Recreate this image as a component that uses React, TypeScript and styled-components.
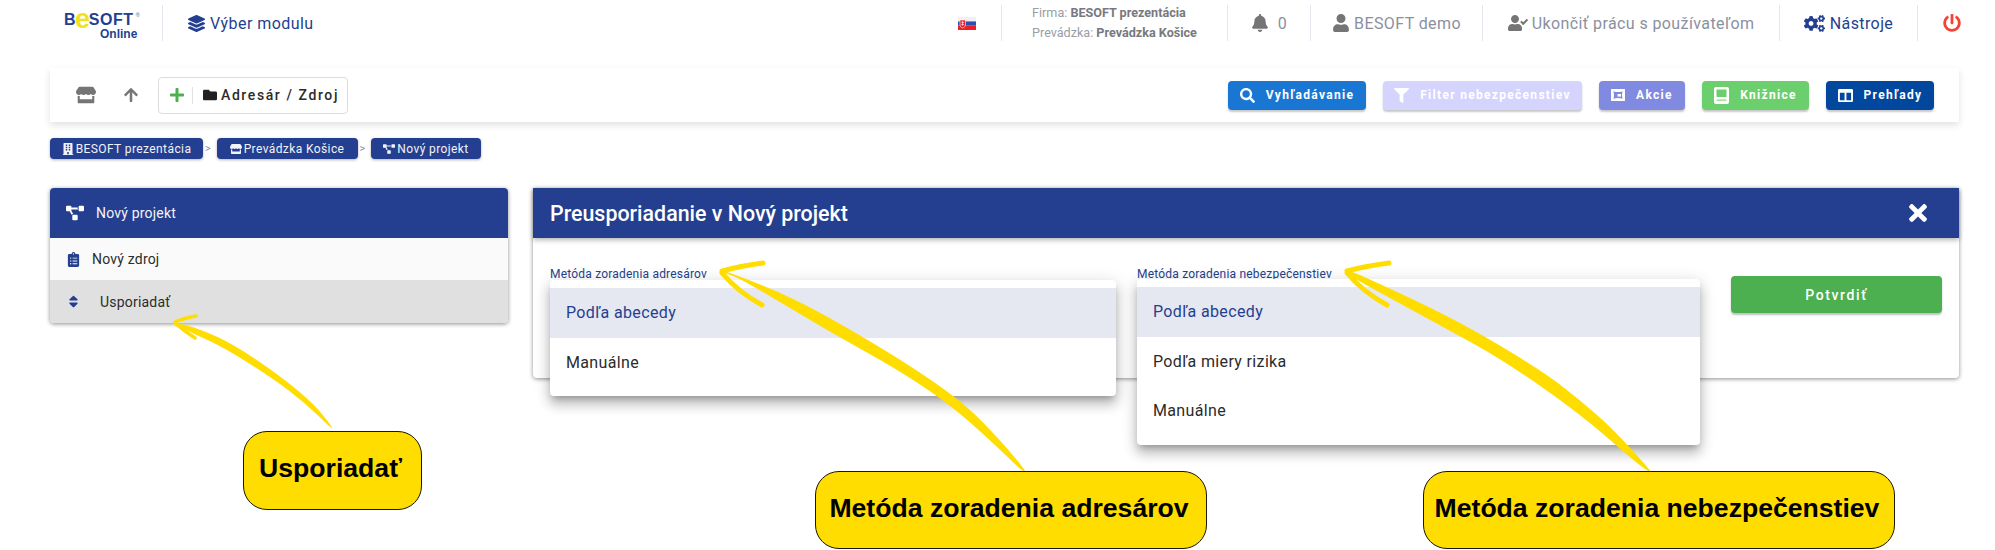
import React from "react";
import styled, { createGlobalStyle } from "styled-components";
import {
  FaArrowUp,
  FaBell,
  FaBuilding,
  FaClipboardList,
  FaCogs,
  FaColumns,
  FaFilter,
  FaFolder,
  FaLayerGroup,
  FaPlus,
  FaPowerOff,
  FaProjectDiagram,
  FaSearch,
  FaSort,
  FaStore,
  FaTimes,
  FaUser,
  FaUserCheck,
} from "react-icons/fa";

const NAVY = "#243f8f";

const GlobalStyle = createGlobalStyle`
  html, body {
    margin: 0;
    background: #fff;
    font-family: Roboto, "Noto Sans", sans-serif;
  }
`;

const Page = styled.div`
  position: relative;
  width: 1995px;
  height: 550px;
  overflow: hidden;
  background: #fff;
`;

const TopBar = styled.header`
  display: flex;
  height: 36px;
  padding: 5px 0 9px;
`;

const LogoCell = styled.div`
  width: 98px;
  margin-left: 64px;
  border-right: 1px solid #e4e7f0;
  display: flex;
  flex-direction: column;
`;

const LogoTop = styled.div`
  font-family: "Liberation Sans", Arial, sans-serif;
  font-size: 16px;
  line-height: 16px;
  letter-spacing: 0.55px;
  font-weight: 700;
  color: ${NAVY};
  margin-top: 7px;
  display: flex;
  align-items: center;
  sup {
    font-size: 6px;
    line-height: 6px;
    align-self: flex-start;
    color: #8a8fa5;
    margin-left: 2px;
  }
`;

const LogoE = styled.span`
  color: #f2e21a;
  font-size: 27px;
  line-height: 16px;
  margin: -3px -2px 0 -1px;
`;

const LogoBottom = styled.div`
  font-family: "Liberation Sans", Arial, sans-serif;
  font-size: 12px;
  line-height: 12px;
  font-weight: 700;
  color: ${NAVY};
  margin: 0 0 0 36px;
`;

const ModuleLink = styled.div`
  display: flex;
  align-items: center;
  gap: 5px;
  margin-left: 25px;
  font-size: 16px;
  letter-spacing: 0.45px;
  color: ${NAVY};
  svg {
    font-size: 17px;
  }
`;

const Spacer = styled.div`
  flex: 1;
`;

const NavCell = styled.div<{ $w: number; $color?: string; $gap?: number; $plain?: boolean; $size?: number; $pr?: number }>`
  width: ${(p) => p.$w}px;
  box-sizing: border-box;
  display: flex;
  align-items: center;
  justify-content: center;
  gap: ${(p) => p.$gap ?? 5}px;
  padding-right: ${(p) => p.$pr ?? 0}px;
  border-left: ${(p) => (p.$plain ? "none" : "1px solid #e4e7f0")};
  font-size: 16px;
  letter-spacing: 0.4px;
  color: ${(p) => p.$color ?? "#8b909e"};
  svg {
    color: ${(p) => p.$color ?? "#757575"};
    font-size: ${(p) => p.$size ?? 18}px;
  }
`;

const Flag = styled.svg`
  display: block;
  width: 18px;
  height: 13px;
`;

const CompanyInfo = styled.div`
  font-size: 12.6px;
  line-height: 20px;
  letter-spacing: 0;
  color: #9a9da6;
  b {
    font-weight: 700;
    color: #77797f;
  }
`;

const Toolbar = styled.div`
  display: flex;
  align-items: center;
  height: 54px;
  margin: 18px 36px 0 50px;
  background: #fff;
  box-shadow: 0 3px 7px rgba(0, 0, 0, 0.12);
`;

const ToolIcon = styled.span<{ $w: number; $size: number }>`
  display: flex;
  justify-content: flex-end;
  width: ${(p) => p.$w}px;
  color: #757575;
  font-size: ${(p) => p.$size}px;
`;

const DirectoryBox = styled.div`
  display: flex;
  align-items: center;
  box-sizing: border-box;
  width: 190px;
  height: 37px;
  margin-left: 19px;
  border: 1px solid #dcdcdc;
  border-radius: 4px;
  font-size: 14px;
  font-weight: 500;
  letter-spacing: 1.6px;
  color: #2b2b2b;
`;

const PlusPart = styled.span`
  display: flex;
  align-items: center;
  height: 17px;
  padding: 0 7px 0 10px;
  border-right: 1px solid #e2e2e2;
  color: #4caf50;
  font-size: 16px;
`;

const FolderPart = styled.span`
  display: flex;
  align-items: center;
  gap: 4px;
  margin-left: 10px;
  white-space: nowrap;
  svg {
    font-size: 14px;
    color: #212121;
  }
`;

const ActionRow = styled.div`
  display: flex;
  gap: 17px;
  margin-left: auto;
  margin-right: 25px;
`;

const ActionButton = styled.div<{ $bg: string; $w: number }>`
  display: flex;
  align-items: center;
  justify-content: center;
  gap: 11px;
  box-sizing: border-box;
  width: ${(p) => p.$w}px;
  height: 29px;
  border-radius: 4px;
  background: ${(p) => p.$bg};
  box-shadow: 0 2px 2px rgba(0, 0, 0, 0.22);
  color: #fff;
  font-size: 12px;
  font-weight: 700;
  letter-spacing: 1.3px;
  white-space: nowrap;
  svg {
    font-size: 15px;
    flex: none;
  }
`;

const Breadcrumbs = styled.nav`
  display: flex;
  align-items: center;
  margin: 16px 0 0 50px;
  gap: 2px;
`;

const Crumb = styled.span<{ $w: number }>`
  display: flex;
  align-items: center;
  justify-content: center;
  gap: 2px;
  box-sizing: border-box;
  width: ${(p) => p.$w}px;
  height: 21px;
  border-radius: 4px;
  background: ${NAVY};
  box-shadow: 0 1px 3px rgba(0, 0, 0, 0.3);
  color: #f2f3f8;
  font-size: 12px;
  letter-spacing: 0.4px;
  white-space: nowrap;
  svg {
    font-size: 12px;
  }
`;

const CrumbSep = styled.span`
  width: 9.5px;
  font-size: 11px;
  color: #8d8d8d;
`;

const Content = styled.main`
  display: flex;
  align-items: flex-start;
  gap: 25px;
  margin: 29px 36px 0 50px;
`;

const SidePanel = styled.aside`
  width: 458px;
  border-radius: 4px;
  overflow: hidden;
  box-shadow: 0 1px 4px rgba(0, 0, 0, 0.45);
`;

const SideHeader = styled.div`
  display: flex;
  align-items: center;
  gap: 12px;
  height: 50px;
  padding-left: 16px;
  background: ${NAVY};
  color: #f3f4f9;
  font-size: 14px;
  letter-spacing: 0.2px;
  svg {
    font-size: 18px;
    color: #fff;
  }
`;

const SideRow = styled.div<{ $active?: boolean; $gap: number; $h: number }>`
  display: flex;
  align-items: center;
  gap: ${(p) => p.$gap}px;
  height: ${(p) => p.$h}px;
  padding-left: 16px;
  background: ${(p) => (p.$active ? "#e0e0e0" : "#fafafa")};
  color: #2c2c2c;
  font-size: 14px;
  letter-spacing: 0.2px;
  svg {
    font-size: 15px;
    color: ${NAVY};
  }
`;

const MainPanel = styled.section`
  flex: 1;
  height: 190px;
  border-radius: 0 0 4px 4px;
  box-shadow: 0 1px 4px rgba(0, 0, 0, 0.45);
  background: #fff;
`;

const MainHeader = styled.div`
  display: flex;
  align-items: center;
  justify-content: space-between;
  height: 50px;
  padding: 0 28px 0 17px;
  background: ${NAVY};
  box-shadow: 0 2px 5px rgba(0, 0, 0, 0.3);
  color: #fff;
  font-size: 21.4px;
  font-weight: 500;
  svg {
    font-size: 26px;
  }
`;

const FormRow = styled.div`
  display: flex;
  align-items: flex-start;
  padding-left: 17px;
`;

const Field = styled.div<{ $w: number; $mr: number }>`
  position: relative;
  width: ${(p) => p.$w}px;
  margin-right: ${(p) => p.$mr}px;
  padding-top: 29px;
`;

const FieldLabel = styled.label`
  display: block;
  font-size: 12px;
  line-height: 14px;
  letter-spacing: 0.2px;
  color: ${NAVY};
  white-space: nowrap;
`;

const Menu = styled.ul<{ $top: number }>`
  position: absolute;
  top: ${(p) => p.$top}px;
  left: 0;
  right: 0;
  margin: 0;
  padding: 8px 0 9px;
  list-style: none;
  background: #fff;
  border-radius: 4px;
  box-shadow: 0 5px 6px -3px rgba(0, 0, 0, 0.25), 0 9px 12px 1px rgba(0, 0, 0, 0.16), 0 3px 16px 2px rgba(0, 0, 0, 0.12);
`;

const MenuItem = styled.li<{ $selected?: boolean }>`
  display: flex;
  align-items: center;
  height: 49.5px;
  padding-left: 16px;
  font-size: 16px;
  letter-spacing: 0.35px;
  color: ${(p) => (p.$selected ? NAVY : "#2b2b2b")};
  background: ${(p) => (p.$selected ? "#e5e7f1" : "transparent")};
`;

const ConfirmButton = styled.div`
  display: flex;
  align-items: center;
  justify-content: center;
  width: 211px;
  height: 37px;
  margin-top: 38px;
  border-radius: 4px;
  background: #4caf50;
  box-shadow: 0 2px 2px rgba(0, 0, 0, 0.25);
  color: #fff;
  font-size: 14px;
  font-weight: 500;
  letter-spacing: 1.6px;
`;

const ArrowLayer = styled.svg`
  position: absolute;
  inset: 0;
  width: 1995px;
  height: 550px;
  pointer-events: none;
`;

const Callout = styled.div<{ $x: number; $y: number; $w: number; $h: number }>`
  position: absolute;
  left: ${(p) => p.$x}px;
  top: ${(p) => p.$y}px;
  width: ${(p) => p.$w}px;
  height: ${(p) => p.$h}px;
  box-sizing: border-box;
  display: flex;
  align-items: center;
  justify-content: center;
  padding: 0 4px 4px 0;
  background: #ffdd00;
  border: 1px solid #1c1800;
  border-radius: 24px;
  font-family: "Liberation Sans", Arial, sans-serif;
  font-size: 26.6px;
  font-weight: 700;
  color: #000;
  white-space: nowrap;
`;

// closed smooth outline through the points, used for the hand-drawn arrow bodies
function smooth(points: number[][]) {
  const mid = (a: number[], b: number[]) => [(a[0] + b[0]) / 2, (a[1] + b[1]) / 2];
  const start = mid(points[points.length - 1], points[0]);
  let d = `M${start[0]} ${start[1]}`;
  points.forEach((pt, i) => {
    const m = mid(pt, points[(i + 1) % points.length]);
    d += `Q${pt[0]} ${pt[1]} ${m[0]} ${m[1]}`;
  });
  return d + "Z";
}

const arrows = [
  {
    body: [
      [174, 322], [200, 329], [235, 345], [283, 378], [315, 405], [333, 428],
      [331, 428], [305, 403], [275, 380], [225, 348], [190, 332], [174, 324],
    ],
    barbs: ["M196 316Q184 318 175 322", "M195 338Q184 331 175 323"],
    width: 3.5,
  },
  {
    body: [
      [720, 269], [790, 296], [860, 335], [920, 372], [966, 405], [1000, 440], [1027, 472],
      [1023, 472], [990, 440], [948, 403], [895, 368], [830, 332], [770, 296], [735, 276], [720, 272],
    ],
    barbs: ["M763 263Q740 266 722 271", "M762 305Q738 292 722 273"],
    width: 5,
  },
  {
    body: [
      [1345, 269], [1365, 277], [1457, 320], [1541, 370], [1580, 400], [1614, 430], [1652, 472],
      [1649, 472], [1633, 460], [1579, 413], [1503, 360], [1445, 328], [1388, 297], [1357, 280], [1345, 272],
    ],
    barbs: ["M1389 263Q1366 266 1347 271", "M1387 305Q1363 292 1347 273"],
    width: 5,
  },
];

export default function App() {
  return (
    <Page>
      <GlobalStyle />
      <TopBar>
        <LogoCell>
          <LogoTop>
            B<LogoE>e</LogoE>SOFT<sup>®</sup>
          </LogoTop>
          <LogoBottom>Online</LogoBottom>
        </LogoCell>
        <ModuleLink>
          <FaLayerGroup />
          Výber modulu
        </ModuleLink>
        <Spacer />
        <NavCell $w={68} $plain>
          <Flag viewBox="0 0 18 13">
            <rect width="18" height="4.4" y="0" fill="#f0f0f4" />
            <rect width="18" height="4.3" y="4.4" fill="#2b50b0" />
            <rect width="18" height="4.3" y="8.7" fill="#ee1c25" />
            <path d="M2 3h5.5v5c0 1.6-1.4 2.5-2.75 3C3.4 10.5 2 9.6 2 8z" fill="#ee1c25" stroke="#fff" strokeWidth="0.6" />
            <path d="M4.4 4h.7v1.2h1v.6h-1v1.4h1.2v.6H5.1v1h-.7v-1H3.2v-.6h1.2V5.8h-1v-.6h1z" fill="#fff" />
          </Flag>
        </NavCell>
        <NavCell $w={226}>
          <CompanyInfo>
            Firma: <b>BESOFT prezentácia</b>
            <br />
            Prevádzka: <b>Prevádzka Košice</b>
          </CompanyInfo>
        </NavCell>
        <NavCell $w={83} $gap={9}>
          <FaBell />
          0
        </NavCell>
        <NavCell $w={172} $gap={4}>
          <FaUser />
          BESOFT demo
        </NavCell>
        <NavCell $w={297} $gap={4} $size={20}>
          <FaUserCheck />
          Ukončiť prácu s používateľom
        </NavCell>
        <NavCell $w={138} $color={NAVY} $size={21}>
          <FaCogs />
          Nástroje
        </NavCell>
        <NavCell $w={78} $color="#f44336" $pr={9}>
          <FaPowerOff />
        </NavCell>
      </TopBar>

      <Toolbar>
        <ToolIcon $w={46} $size={20}>
          <FaStore />
        </ToolIcon>
        <ToolIcon $w={43} $size={16}>
          <FaArrowUp />
        </ToolIcon>
        <DirectoryBox>
          <PlusPart>
            <FaPlus />
          </PlusPart>
          <FolderPart>
            <FaFolder />
            Adresár / Zdroj
          </FolderPart>
        </DirectoryBox>
        <ActionRow>
          <ActionButton $bg="#1976d2" $w={138}>
            <FaSearch />
            Vyhľadávanie
          </ActionButton>
          <ActionButton $bg="#d4d4ff" $w={199}>
            <FaFilter />
            Filter nebezpečenstiev
          </ActionButton>
          <ActionButton $bg="#7f8ae0" $w={86}>
            <svg width="14" height="12" viewBox="0 0 14 12" fill="#fff">
              <path
                fillRule="evenodd"
                d="M0 0H14V12H0ZM2.5 2.2Q7 4 11.5 2.2Q10.4 6 11.5 9.8Q7 8 2.5 9.8Q3.6 6 2.5 2.2Z"
              />
              <rect x="6.5" y="5" width="3.5" height="2.6" />
            </svg>
            Akcie
          </ActionButton>
          <ActionButton $bg="#6ccf6e" $w={107}>
            <svg width="15" height="17" viewBox="0 0 15 17">
              <rect width="15" height="17" rx="2" fill="#fff" />
              <rect x="2.5" y="2.5" width="10" height="7.5" fill="#6ccf6e" />
              <rect x="2.5" y="12.6" width="10" height="1" fill="#6ccf6e" />
            </svg>
            Knižnice
          </ActionButton>
          <ActionButton $bg="#01479d" $w={108}>
            <FaColumns />
            Prehľady
          </ActionButton>
        </ActionRow>
      </Toolbar>

      <Breadcrumbs>
        <Crumb $w={153}>
          <FaBuilding />
          BESOFT prezentácia
        </Crumb>
        <CrumbSep>&gt;</CrumbSep>
        <Crumb $w={141}>
          <FaStore />
          Prevádzka Košice
        </Crumb>
        <CrumbSep>&gt;</CrumbSep>
        <Crumb $w={110}>
          <FaProjectDiagram />
          Nový projekt
        </Crumb>
      </Breadcrumbs>

      <Content>
        <SidePanel>
          <SideHeader>
            <FaProjectDiagram />
            Nový projekt
          </SideHeader>
          <SideRow $gap={11} $h={42}>
            <FaClipboardList />
            Nový zdroj
          </SideRow>
          <SideRow $active $gap={19} $h={43}>
            <FaSort />
            Usporiadať
          </SideRow>
        </SidePanel>

        <MainPanel>
          <MainHeader>
            Preusporiadanie v Nový projekt
            <FaTimes />
          </MainHeader>
          <FormRow>
            <Field $w={566} $mr={21}>
              <FieldLabel>Metóda zoradenia adresárov</FieldLabel>
              <Menu $top={42}>
                <MenuItem $selected>Podľa abecedy</MenuItem>
                <MenuItem>Manuálne</MenuItem>
              </Menu>
            </Field>
            <Field $w={563} $mr={31}>
              <FieldLabel>Metóda zoradenia nebezpečenstiev</FieldLabel>
              <Menu $top={41}>
                <MenuItem $selected>Podľa abecedy</MenuItem>
                <MenuItem>Podľa miery rizika</MenuItem>
                <MenuItem>Manuálne</MenuItem>
              </Menu>
            </Field>
            <ConfirmButton>Potvrdiť</ConfirmButton>
          </FormRow>
        </MainPanel>
      </Content>

      <ArrowLayer viewBox="0 0 1995 550">
        {arrows.map((a, i) => (
          <g key={i}>
            <path d={smooth(a.body)} fill="#ffdd00" />
            {a.barbs.map((d) => (
              <path key={d} d={d} fill="none" stroke="#ffdd00" strokeWidth={a.width} strokeLinecap="round" />
            ))}
          </g>
        ))}
      </ArrowLayer>

      <Callout $x={243} $y={431} $w={179} $h={79}>
        Usporiadať
      </Callout>
      <Callout $x={815} $y={471} $w={392} $h={78}>
        Metóda zoradenia adresárov
      </Callout>
      <Callout $x={1423} $y={471} $w={472} $h={78}>
        Metóda zoradenia nebezpečenstiev
      </Callout>
    </Page>
  );
}
